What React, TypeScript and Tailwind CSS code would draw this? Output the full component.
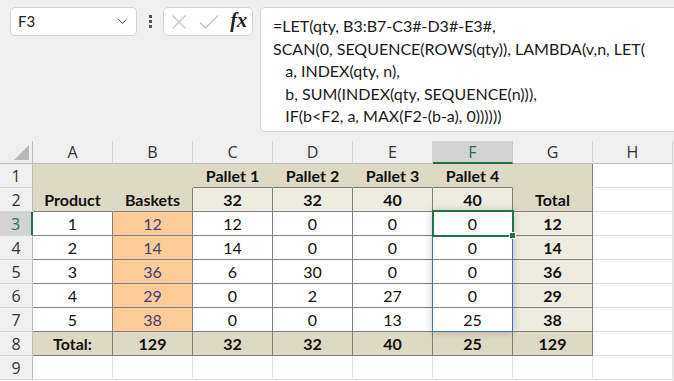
import { ChevronDown } from 'lucide-react';

// border / fill tokens (written out so tailwind picks them up)
const TAN = 'bg-[#ddd9c4]';
const LIGHT = 'bg-[#eeece1]';
const ORANGE = 'bg-[#ffcc99] text-[#3f3f76]';
const WHITE = 'bg-white';
const RG = 'border-r-[#7f7f7f]';
const RL = 'border-r-[#e1e1e1]';
const RT = 'border-r-[#ddd9c4]';
const BG = 'border-b-[#7f7f7f]';
const BL = 'border-b-[#e1e1e1]';
const BT = 'border-b-[#ddd9c4]';

type Cell = { t?: string; cls: string; bold?: boolean };

const cols = ['A', 'B', 'C', 'D', 'E', 'F', 'G', 'H'];
const blank: Cell = { cls: `${WHITE} ${RL} ${BL}` };

const body = [
  ['1', '12', '12', '0', '0', '0', '12'],
  ['2', '14', '14', '0', '0', '0', '14'],
  ['3', '36', '6', '30', '0', '0', '36'],
  ['4', '29', '0', '2', '27', '0', '29'],
  ['5', '38', '0', '0', '13', '25', '38'],
];

const rows: Cell[][] = [
  [
    { cls: `${TAN} ${RT} ${BT}` },
    { cls: `${TAN} ${RT} ${BT}` },
    { t: 'Pallet 1', bold: true, cls: `${TAN} ${RT} ${BG}` },
    { t: 'Pallet 2', bold: true, cls: `${TAN} ${RT} ${BG}` },
    { t: 'Pallet 3', bold: true, cls: `${TAN} ${RT} ${BG}` },
    { t: 'Pallet 4', bold: true, cls: `${TAN} ${RT} ${BG}` },
    { cls: `${TAN} ${RG} ${BT}` },
    blank,
  ],
  [
    { t: 'Product', bold: true, cls: `${TAN} ${RT} ${BG}` },
    { t: 'Baskets', bold: true, cls: `${TAN} ${RG} ${BG}` },
    { t: '32', bold: true, cls: `${LIGHT} ${RG} ${BG}` },
    { t: '32', bold: true, cls: `${LIGHT} ${RG} ${BG}` },
    { t: '40', bold: true, cls: `${LIGHT} ${RG} ${BG}` },
    { t: '40', bold: true, cls: `${LIGHT} ${RG} ${BG}` },
    { t: 'Total', bold: true, cls: `${TAN} ${RG} ${BG}` },
    blank,
  ],
  ...body.map((r) =>
    r
      .map((t, i): Cell => ({
        t,
        bold: i === 6,
        cls: `${i === 1 ? ORANGE : i === 6 ? LIGHT : WHITE} ${RG} ${BG}`,
      }))
      .concat([blank]),
  ),
  ['Total:', '129', '32', '32', '40', '25', '129']
    .map((t): Cell => ({ t, bold: true, cls: `${TAN} ${RG} ${BG}` }))
    .concat([blank]),
  cols.map(() => blank),
];

function NameBox() {
  return (
    <div className="w-[127px] h-[29px] bg-white border border-[#d4d4d4] rounded-[5px] flex items-center pl-[7px] pr-[6px]">
      <span className="flex-1 text-[15px] text-[#222]">F3</span>
      <ChevronDown size={15} strokeWidth={1.6} className="text-[#444]" />
    </div>
  );
}

function FxBox() {
  return (
    <div className="w-[90px] h-[29px] bg-white border border-[#d4d4d4] rounded-[5px] flex items-center pl-[7px] pr-[5px]">
      <svg width="16" height="16" viewBox="0 0 16 16" className="mr-[12px]">
        <path d="M1.5 1.5 L14.5 14.5 M14.5 1.5 L1.5 14.5" stroke="#c4c4c4" strokeWidth="1.3" fill="none" />
      </svg>
      <svg width="20" height="16" viewBox="0 0 20 16">
        <path d="M1 8.5 L6.5 14 L19 1.5" stroke="#c4c4c4" strokeWidth="1.3" fill="none" />
      </svg>
      <span className="ml-auto text-[20px] italic font-semibold text-[#222] leading-none pb-[3px]" style={{ fontFamily: '"Liberation Serif", "DejaVu Serif", serif' }}>
        fx
      </span>
    </div>
  );
}

export default function App() {
  return (
    <div className="w-[674px] h-[381px] overflow-hidden bg-[#f0f0f0] text-[#111]" style={{ fontFamily: 'Lato, "Liberation Sans", sans-serif' }}>
      {/* formula bar */}
      <div className="h-[141px] flex items-start pt-[7px] pl-[10px]">
        <NameBox />
        <div className="w-[26px] h-[29px] flex flex-col items-center justify-center gap-[2px]">
          <span className="w-[3px] h-[3px] bg-[#555]" />
          <span className="w-[3px] h-[3px] bg-[#555]" />
          <span className="w-[3px] h-[3px] bg-[#555]" />
        </div>
        <FxBox />
        <div className="ml-[7px] flex-1 -mr-[6px] h-[125px] bg-white border border-[#d4d4d4] rounded-l-[5px] pl-[12px] pt-[7px] text-[16px] leading-[22.5px] text-[#1a1a1a] whitespace-pre">
          {`=LET(qty, B3:B7-C3#-D3#-E3#,
SCAN(0, SEQUENCE(ROWS(qty)), LAMBDA(v,n, LET(
   a, INDEX(qty, n),
   b, SUM(INDEX(qty, SEQUENCE(n))),
   IF(b<F2, a, MAX(F2-(b-a), 0))))))`}
        </div>
      </div>

      {/* sheet */}
      <div className="grid grid-cols-[33px_repeat(8,80px)] grid-rows-[23px_repeat(9,24px)]">
        <div className="bg-[#f0f0f0] border-r border-b border-[#bcbcbc] relative">
          <div className="absolute right-[3px] bottom-[3px] w-0 h-0 border-l-[15px] border-l-transparent border-b-[15px] border-b-[#b8b8b8]" />
        </div>
        {cols.map((c) => (
          <div
            key={c}
            className={`flex items-center justify-center text-[16px] ${
              c === 'F'
                ? 'bg-[#d2d2d2] text-[#217346] border-b-2 border-b-[#217346] border-r border-r-[#c6c6c6]'
                : 'bg-[#f0f0f0] text-[#333] border-b border-b-[#bcbcbc] border-r border-r-[#d4d4d4]'
            }`}
            style={{ fontFamily: '"Open Sans", "Noto Sans", sans-serif' }}
          >
            {c}
          </div>
        ))}
        {rows.map((row, ri) => (
          <Row key={ri} n={ri + 1} cells={row} />
        ))}
      </div>
    </div>
  );
}

function Row({ n, cells }: { n: number; cells: Cell[] }) {
  return (
    <>
      <div
        className={`flex items-center justify-center text-[16px] ${
          n === 3
            ? 'bg-[#d2d2d2] text-[#217346] border-r-2 border-r-[#217346] border-b border-b-[#d4d4d4]'
            : 'bg-[#f0f0f0] text-[#333] border-r border-r-[#bcbcbc] border-b border-b-[#d9d9d9]'
        }`}
        style={{ fontFamily: '"Open Sans", "Noto Sans", sans-serif' }}
      >
        {n}
      </div>
      {cells.map((c, i) => (
        <div
          key={i}
          className={`relative flex items-end justify-center pb-[1px] border-r border-b text-[16px] leading-[20px] ${c.cls} ${
            c.bold ? 'font-bold' : ''
          }`}
        >
          {c.t}
          {n === 3 && i === 5 && (
            <>
              {/* spill range */}
              <div className="absolute -left-px -top-px w-[81px] h-[121px] border border-[#3f6fc7] shadow-[0_0_8px_rgba(0,0,0,0.22)] z-10 pointer-events-none" />
              {/* active cell */}
              <div className="absolute -left-px -top-[2px] w-[82px] h-[27px] border-2 border-[#217346] z-20 pointer-events-none" />
              <div className="absolute -right-[4px] -bottom-[4px] w-[7px] h-[7px] bg-[#217346] border border-white z-30" />
            </>
          )}
        </div>
      ))}
    </>
  );
}
